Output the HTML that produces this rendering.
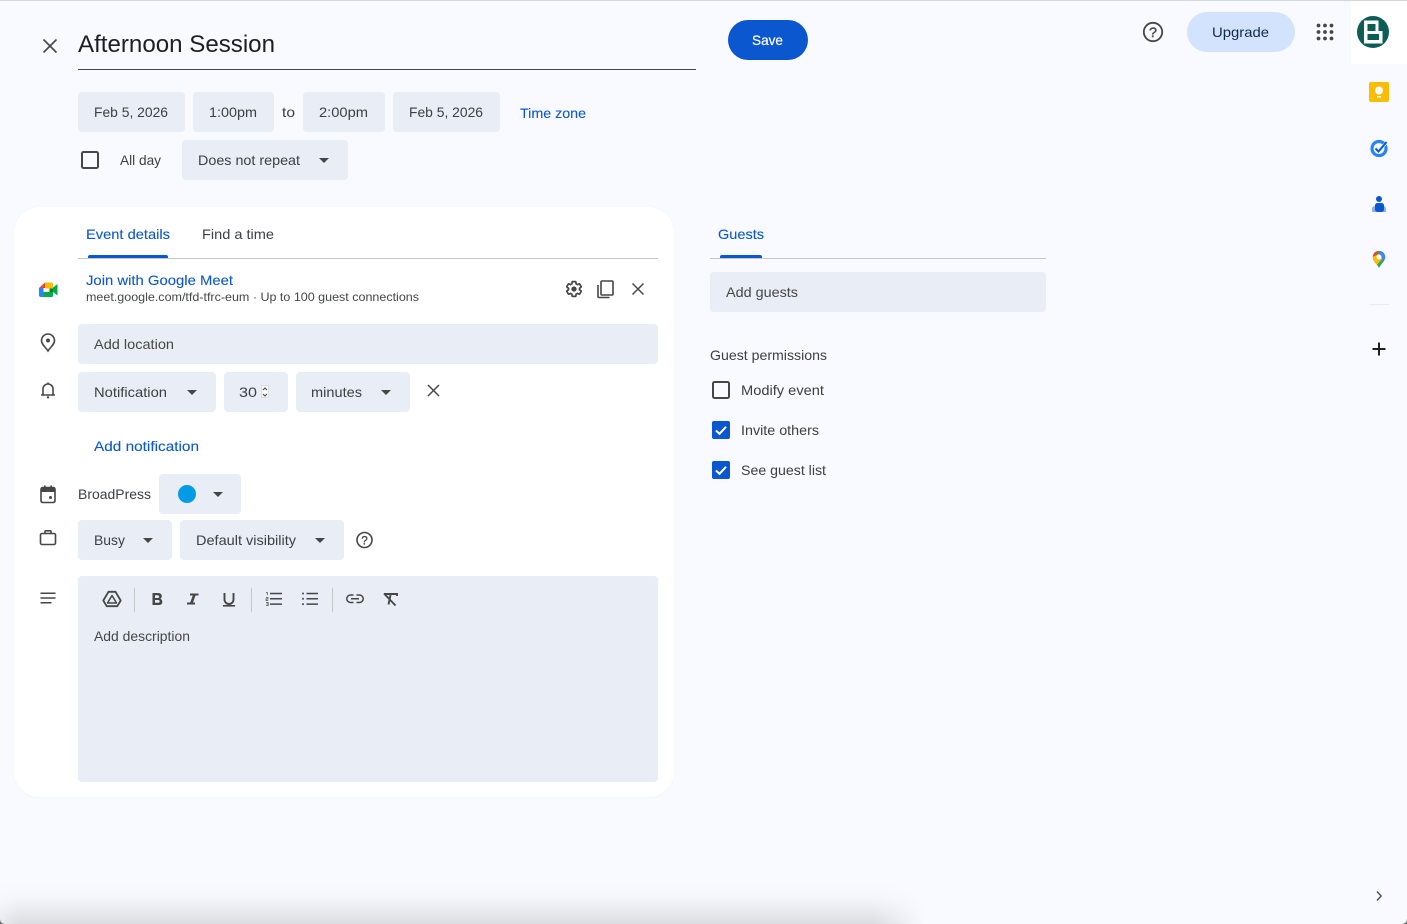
<!DOCTYPE html>
<html lang="en"><head><meta charset="utf-8"><title>Afternoon Session</title>
<style>
html,body{margin:0;padding:0;width:1407px;height:924px;overflow:hidden;background:#f8faff}
svg{display:block}
text{font-family:"Liberation Sans",sans-serif;font-size:14px;fill:#3c4043}
.b{fill:#0b57d0;stroke:#0b57d0;stroke-width:.1}
.d{fill:#1f1f1f}
.f{fill:#e9eef6}
.i{fill:none;stroke:#444746;stroke-width:1.600}
.a{fill:#444746}
</style></head>
<body>
<svg width="1407" height="924" viewBox="0 0 1407 924" xmlns="http://www.w3.org/2000/svg">
<defs>
<linearGradient id="vg" x1="0" y1="0" x2="0" y2="1">
<stop offset="0" stop-color="#000" stop-opacity="0"/>
<stop offset=".3" stop-color="#000" stop-opacity=".012"/>
<stop offset=".6" stop-color="#000" stop-opacity=".05"/>
<stop offset=".85" stop-color="#000" stop-opacity=".09"/>
<stop offset="1" stop-color="#000" stop-opacity=".115"/>
</linearGradient>
<linearGradient id="hg" gradientUnits="userSpaceOnUse" x1="0" y1="0" x2="925" y2="0">
<stop offset="0" stop-color="#888"/>
<stop offset=".02" stop-color="#fff"/>
<stop offset=".945" stop-color="#fff"/>
<stop offset="1" stop-color="#000"/>
</linearGradient>
<mask id="hm" maskUnits="userSpaceOnUse" x="0" y="884" width="925" height="40"><rect x="0" y="884" width="925" height="40" fill="url(#hg)"/></mask>
<filter id="sh" x="-2%" y="-2%" width="104%" height="104%"><feGaussianBlur stdDeviation="1.500"/></filter>
<clipPath id="mp"><path d="M1379,268C1377.500,264.500 1372.800,261.500 1372.800,257A6.200,6.200 0 0 1 1385.200,257C1385.200,261.500 1380.500,264.500 1379,268Z"/></clipPath>
</defs>
<rect width="1407" height="924" fill="#f8faff"/>
<rect x="0" y="0" width="1407" height="1" fill="#d4d6da"/>
<rect x="0" y="884" width="925" height="40" fill="url(#vg)" mask="url(#hm)"/>
<path d="M0,919V924H5A5,5 0 0 1 0,919Z" fill="#777"/><path d="M1407,919V924H1402A5,5 0 0 0 1407,919Z" fill="#777"/>

<!-- right rail -->
<rect x="1351" y="1" width="56" height="63" fill="#fff"/>
<circle cx="1373" cy="32" r="16" fill="#0d5c56"/>
<path d="M1364,20.500H1378.500V31H1382.500V43.500H1364Z" fill="#fff"/>
<rect x="1367.500" y="24" width="8" height="7" fill="#0d5c56"/><rect x="1367.500" y="34" width="11.500" height="6" fill="#0d5c56"/>

<rect x="1369" y="82" width="20" height="20" rx="2" fill="#fbbc04"/>
<circle cx="1379" cy="90.500" r="4" fill="#fff"/><rect x="1377" y="96" width="4" height="1.500" fill="#fff"/>

<circle cx="1379" cy="148.500" r="7" fill="none" stroke="#2684fc" stroke-width="3.200"/>
<path d="M1375.500,148.500l3,3l7,-8" fill="none" stroke="#f8faff" stroke-width="3"/>
<path d="M1375.500,148.500l3,3l8,-9.500" fill="none" stroke="#0b57d0" stroke-width="2"/>

<circle cx="1379" cy="199" r="3" fill="#0b57d0"/>
<path d="M1372,212V209Q1372,206 1375,206H1383Q1386,206 1386,209V212Z" fill="#8ab0ee"/>
<rect x="1375" y="203" width="9" height="9" rx="2.500" fill="#0b57d0"/>

<g clip-path="url(#mp)">
<rect x="1370" y="249" width="20" height="20" fill="#34a853"/>
<path d="M1379,249H1390V259L1381,261Z" fill="#4285f4"/>
<path d="M1370,249H1379L1374,262L1370,258Z" fill="#ea4335"/>
<path d="M1370,258L1379,254L1382,259L1376,266H1370Z" fill="#fbbc04"/>
</g>
<circle cx="1379" cy="257" r="2.500" fill="#fff"/>

<rect x="1369" y="304" width="20" height="1" fill="#e8eaed"/>
<path d="M1379,342.500V355.500M1372.500,349H1385.500" stroke="#1f1f1f" stroke-width="2" fill="none"/>
<path d="M1377,891.500l4.200,4.500l-4.200,4.500" fill="none" stroke="#444746" stroke-width="1.300"/>

<!-- header -->
<path d="M43.500,39.500L56.500,52.500M56.500,39.500L43.500,52.500" fill="none" stroke="#444746" stroke-width="1.600"/>
<text x="78" y="52" style="font-size:24px" class="d" textLength="197" lengthAdjust="spacingAndGlyphs">Afternoon Session</text>
<rect x="78" y="69" width="618" height="1" fill="#444746"/>

<rect x="728" y="20" width="80" height="40" rx="20" fill="#0b57d0"/>
<text x="752" y="45" style="fill:#fff;stroke:#fff;stroke-width:.2" textLength="31" lengthAdjust="spacingAndGlyphs">Save</text>

<circle cx="1153" cy="32" r="9.200" class="i" style="stroke-width:1.800"/>
<text x="1149" y="37" style="font-size:14px;fill:#444746;stroke:#444746;stroke-width:.4" textLength="8" lengthAdjust="spacingAndGlyphs">?</text>

<rect x="1187" y="12" width="108" height="40" rx="20" fill="#d3e3fd"/>
<text x="1212" y="37" style="fill:#0f2a55" textLength="57" lengthAdjust="spacingAndGlyphs">Upgrade</text>

<g fill="#444746">
<circle cx="1318.500" cy="25.500" r="1.900"/><circle cx="1325" cy="25.500" r="1.900"/><circle cx="1331.500" cy="25.500" r="1.900"/>
<circle cx="1318.500" cy="32" r="1.900"/><circle cx="1325" cy="32" r="1.900"/><circle cx="1331.500" cy="32" r="1.900"/>
<circle cx="1318.500" cy="38.500" r="1.900"/><circle cx="1325" cy="38.500" r="1.900"/><circle cx="1331.500" cy="38.500" r="1.900"/>
</g>

<!-- date row -->
<rect class="f" x="78" y="92" width="107" height="40" rx="4"/>
<rect class="f" x="193" y="92" width="81" height="40" rx="4"/>
<rect class="f" x="303" y="92" width="82" height="40" rx="4"/>
<rect class="f" x="393" y="92" width="107" height="40" rx="4"/>
<text x="94" y="117" textLength="74" lengthAdjust="spacingAndGlyphs">Feb 5, 2026</text>
<text x="209" y="117" textLength="48" lengthAdjust="spacingAndGlyphs">1:00pm</text>
<text x="282" y="117" textLength="13" lengthAdjust="spacingAndGlyphs">to</text>
<text x="319" y="117" textLength="49" lengthAdjust="spacingAndGlyphs">2:00pm</text>
<text x="409" y="117" textLength="74" lengthAdjust="spacingAndGlyphs">Feb 5, 2026</text>
<text x="520" y="118" class="b" textLength="66" lengthAdjust="spacingAndGlyphs">Time zone</text>

<rect x="82" y="152" width="16" height="16" rx="1.500" fill="none" stroke="#444746" stroke-width="2"/>
<text x="120" y="165" textLength="41" lengthAdjust="spacingAndGlyphs">All day</text>
<rect class="f" x="182" y="140" width="166" height="40" rx="4"/>
<text x="198" y="165" textLength="102" lengthAdjust="spacingAndGlyphs">Does not repeat</text>
<path class="a" d="M319,158h10l-5,5z"/>

<!-- panel -->
<rect x="14" y="207" width="660" height="591" rx="26" fill="#eef0f4" filter="url(#sh)" opacity=".5"/>
<rect x="14" y="207" width="660" height="590" rx="26" fill="#fff"/>

<text x="86" y="239" class="b" textLength="84" lengthAdjust="spacingAndGlyphs">Event details</text>
<text x="202" y="239" textLength="72" lengthAdjust="spacingAndGlyphs">Find a time</text>
<rect x="78" y="258" width="580" height="1" fill="#c7c7c7"/>
<path d="M88,258V257Q88,255 90,255H166Q168,255 168,257V258Z" fill="#0b57d0"/>

<!-- meet -->
<path d="M45,282.500L39,288H45Z" fill="#ea4335"/>
<path d="M45,282.500H51.500Q53,282.500 53,284V288.500H45Z" fill="#fbbc04"/>
<path d="M39,288H43.500V297H41Q39,297 39,295Z" fill="#2684fc"/>
<path d="M43.500,292H53V295.500Q53,297 51.500,297H43.500Z" fill="#00ac47"/>
<path d="M53,287.500V292L57.500,295.500V284Z" fill="#00ac47"/>
<path d="M49.500,288.500H53V292H49.500Z" fill="#00832d"/>
<text x="86" y="285" class="b" textLength="147" lengthAdjust="spacingAndGlyphs">Join with Google Meet</text>
<text x="86" y="301" style="font-size:12px;fill:#444746" textLength="333" lengthAdjust="spacingAndGlyphs">meet.google.com/tfd-tfrc-eum · Up to 100 guest connections</text>

<!-- gear, copy, x -->
<g transform="translate(574,289) scale(.74) translate(-12,-12)">
<path d="M19.430 12.980c.04-.32.07-.64.07-.98s-.03-.66-.07-.98l2.110-1.650c.19-.15.24-.42.12-.64l-2-3.460c-.12-.22-.39-.3-.61-.22l-2.490 1c-.52-.4-1.080-.73-1.690-.98l-.38-2.650C14.460 2.180 14.250 2 14 2h-4c-.25 0-.46.18-.49.42l-.38 2.650c-.61.25-1.170.59-1.690.98l-2.490-1c-.23-.09-.49 0-.61.22l-2 3.460c-.13.22-.07.49.12.64l2.110 1.650c-.04.32-.07.65-.07.98s.03.66.07.98l-2.110 1.650c-.19.15-.24.42-.12.64l2 3.460c.12.22.39.3.61.22l2.490-1c.52.4 1.080.73 1.690.98l.38 2.650c.03.24.24.42.49.42h4c.25 0 .46-.18.49-.42l.38-2.650c.61-.25 1.170-.59 1.690-.98l2.490 1c.23.09.49 0 .61-.22l2-3.460c.12-.22.07-.49-.12-.64l-2.110-1.650z" fill="none" stroke="#444746" stroke-width="2.300"/>
<circle cx="12" cy="12" r="3.600" fill="#444746"/>
</g>
<rect x="601" y="281" width="12" height="14" rx="1" class="i"/>
<path class="i" d="M598,285V296.500Q598,297.500 599,297.500H609.500"/>
<path d="M632.500,283.500L643.500,294.500M643.500,283.500L632.500,294.500" class="i" style="stroke-width:1.500"/>

<!-- location -->
<path class="i" d="M48,351C45.500,347 41.500,344.500 41.500,340.500A6.500,6.500 0 0 1 54.500,340.500C54.500,344.500 50.500,347 48,351Z"/>
<circle cx="48" cy="340.500" r="2" fill="#444746"/>
<rect class="f" x="78" y="324" width="580" height="40" rx="4"/>
<text x="94" y="349" style="fill:#444746" textLength="80" lengthAdjust="spacingAndGlyphs">Add location</text>

<!-- notification -->
<path class="i" d="M43,394.500V389A5,5 0 0 1 53,389V394.500M41,395H55M48,382.500V384"/>
<circle cx="48" cy="397.300" r="1.200" fill="#444746"/>
<rect class="f" x="78" y="372" width="138" height="40" rx="4"/>
<text x="94" y="397" textLength="73" lengthAdjust="spacingAndGlyphs">Notification</text>
<path class="a" d="M187,390h10l-5,5z"/>
<rect class="f" x="224" y="372" width="64" height="40" rx="4"/>
<text x="239" y="397" textLength="18" lengthAdjust="spacingAndGlyphs">30</text>
<rect x="261.300" y="385.300" width="7.400" height="12.400" rx="1.500" fill="#f6f8fb" stroke="#ccd0d8" stroke-width=".6"/>
<path d="M263,390l2,-2l2,2M263,394l2,2l2,-2" fill="none" stroke="#444746" stroke-width="1"/>
<rect class="f" x="296" y="372" width="114" height="40" rx="4"/>
<text x="311" y="397" textLength="51" lengthAdjust="spacingAndGlyphs">minutes</text>
<path class="a" d="M381,390h10l-5,5z"/>
<path d="M428,385L439,396M439,385L428,396" class="i" style="stroke-width:1.500"/>
<text x="94" y="451" class="b" textLength="105" lengthAdjust="spacingAndGlyphs">Add notification</text>

<!-- calendar -->
<path d="M41,489.500Q41,487.500 43,487.500H53Q55,487.500 55,489.500V500.500Q55,502.500 53,502.500H43Q41,502.500 41,500.500Z" class="i"/>
<rect x="41" y="487.500" width="14" height="4.500" fill="#444746"/>
<rect x="44" y="485.500" width="1.700" height="3" fill="#444746"/><rect x="50.300" y="485.500" width="1.700" height="3" fill="#444746"/>
<rect x="49" y="496" width="3" height="3" rx="1.500" fill="#444746"/>
<text x="78" y="499" textLength="73" lengthAdjust="spacingAndGlyphs">BroadPress</text>
<rect class="f" x="159" y="474" width="82" height="40" rx="4"/>
<circle cx="187" cy="494" r="9" fill="#039be5"/>
<path class="a" d="M213,492h10l-5,5z"/>

<!-- busy -->
<rect x="40.500" y="533.500" width="15" height="11" rx="1.500" class="i"/>
<path class="i" d="M45,533.500V531.500Q45,530.800 45.800,530.800H50.200Q51,530.800 51,531.500V533.500"/>
<rect class="f" x="78" y="520" width="94" height="40" rx="4"/>
<text x="94" y="545" textLength="31" lengthAdjust="spacingAndGlyphs">Busy</text>
<path class="a" d="M143,538h10l-5,5z"/>
<rect class="f" x="180" y="520" width="164" height="40" rx="4"/>
<text x="196" y="545" textLength="100" lengthAdjust="spacingAndGlyphs">Default visibility</text>
<path class="a" d="M315,538h10l-5,5z"/>
<circle cx="364.500" cy="540" r="7.500" class="i"/>
<text x="361.300" y="544.500" style="font-size:12px;fill:#444746;stroke:#444746;stroke-width:.3" textLength="6.500" lengthAdjust="spacingAndGlyphs">?</text>

<!-- description -->
<path d="M40.500,593.300H55.500M40.500,598H55.500M40.500,602.700H51.500" fill="none" stroke="#444746" stroke-width="1.500"/>
<rect class="f" x="78" y="576" width="580" height="206" rx="4"/>

<path class="i" style="stroke-width:1.800" d="M108.500,591.800H115.500L120.700,600.500L117.300,606.200H106.700L103.300,600.500Z" stroke-linejoin="round"/>
<path class="i" style="stroke-width:1.500" d="M112,595.500L116.500,603H107.500Z" stroke-linejoin="round"/>
<rect x="134" y="588" width="1" height="24" fill="#c4c7c5"/>
<path class="a" fill-rule="evenodd" d="M152.500,593H158Q161.800,593 161.800,596.300Q161.800,598 160.300,598.800Q162.300,599.500 162.300,602Q162.300,605 158.500,605H152.500ZM155,595.200V598H157.500Q159.200,598 159.200,596.600Q159.200,595.200 157.500,595.200ZM155,600V602.800H158Q159.700,602.800 159.700,601.400Q159.700,600 158,600Z"/>
<path class="a" d="M190,593.500H198.500V595.500H195.500L193,602.500H195V604.500H187V602.500H190.200L192.800,595.500H190Z"/>
<path d="M224.500,593V599.500A4.500,4.500 0 0 0 233.500,599.500V593" fill="none" stroke="#444746" stroke-width="1.900"/>
<rect x="223" y="605" width="12" height="1.600" fill="#444746"/>
<rect x="251" y="588" width="1" height="24" fill="#c4c7c5"/>
<path d="M270,593.500H282M270,598.800H282M270,604.100H282" fill="none" stroke="#444746" stroke-width="1.500"/>
<path d="M266,592.500H267.300V595.300M266,597.500H268V599H266V600.500H268.200M266,602.500H268.200V605.500H266M266.500,604H268" fill="none" stroke="#444746" stroke-width=".7"/>
<path d="M306.500,593.500H318M306.500,598.800H318M306.500,604.100H318" fill="none" stroke="#444746" stroke-width="1.500"/>
<circle cx="303" cy="593.500" r="1" fill="#444746"/><circle cx="303" cy="598.800" r="1" fill="#444746"/><circle cx="303" cy="604.100" r="1" fill="#444746"/>
<rect x="332" y="588" width="1" height="24" fill="#c4c7c5"/>
<path d="M353.500,595H350.500A3.700,3.700 0 0 0 350.500,602.500H353.500M356.500,595H359.500A3.700,3.700 0 0 1 359.500,602.500H356.500M351,598.800H359" fill="none" stroke="#444746" stroke-width="1.500"/>
<path d="M384,594H397V596M390.500,595L388.500,604.500M384,593.500L395.500,605.500" fill="none" stroke="#444746" stroke-width="1.900"/>
<text x="94" y="641" style="fill:#444746" textLength="96" lengthAdjust="spacingAndGlyphs">Add description</text>

<!-- guests -->
<text x="718" y="239" class="b" textLength="46" lengthAdjust="spacingAndGlyphs">Guests</text>
<rect x="710" y="258" width="336" height="1" fill="#c7c7c7"/>
<path d="M720,258V257Q720,255 722,255H760Q762,255 762,257V258Z" fill="#0b57d0"/>
<rect class="f" x="710" y="272" width="336" height="40" rx="4"/>
<text x="726" y="297" style="fill:#444746" textLength="72" lengthAdjust="spacingAndGlyphs">Add guests</text>
<text x="710" y="360" textLength="117" lengthAdjust="spacingAndGlyphs">Guest permissions</text>

<rect x="713" y="382" width="16" height="16" rx="1.500" fill="none" stroke="#444746" stroke-width="2"/>
<text x="741" y="395" textLength="83" lengthAdjust="spacingAndGlyphs">Modify event</text>
<rect x="712" y="421" width="18" height="18" rx="2" fill="#0b57d0"/>
<path d="M716,430.500l3.500,3.300l6.500,-7" fill="none" stroke="#fff" stroke-width="2"/>
<text x="741" y="435" textLength="78" lengthAdjust="spacingAndGlyphs">Invite others</text>
<rect x="712" y="461" width="18" height="18" rx="2" fill="#0b57d0"/>
<path d="M716,470.500l3.500,3.300l6.500,-7" fill="none" stroke="#fff" stroke-width="2"/>
<text x="741" y="475" textLength="85" lengthAdjust="spacingAndGlyphs">See guest list</text>
</svg>
</body></html>
